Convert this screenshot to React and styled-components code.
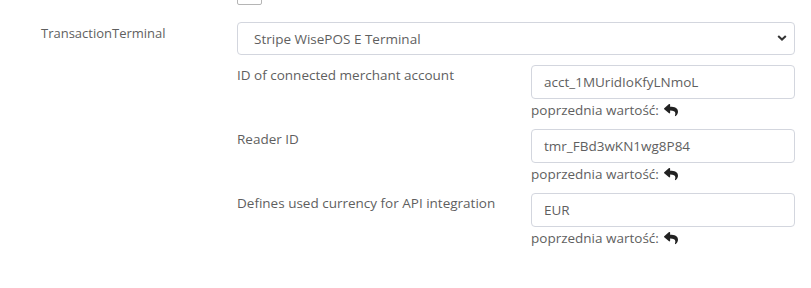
import React from "react";
import styled, { createGlobalStyle } from "styled-components";
import { FaReply } from "react-icons/fa";

const Global = createGlobalStyle`
  html, body { margin: 0; padding: 0; background: #fff; }
  body { font-family: "Open Sans", "Noto Sans", sans-serif; font-size: 13.5px; color: #5f5f5f; }
`;

const Page = styled.div`
  width: 811px;
  height: 288px;
  overflow: hidden;
`;

const Form = styled.div`
  margin-top: -20px;
  display: flex;
  flex-direction: column;
  gap: 17px;
  padding: 0 16px 0 41px;
`;

const Row = styled.div`
  display: grid;
  grid-template-columns: 196px 1fr;
  align-items: start;
`;

const RowLabel = styled.div`
  font-size: 13px;
  line-height: 18px;
  padding-top: 2px;
  color: #5f5f5f;
`;

const Checkbox = styled.div`
  width: 23px;
  height: 23px;
  border: 1px solid #b5b5b5;
  border-radius: 2px;
  background: #fff;
`;

const Value = styled.div`
  display: flex;
  flex-direction: column;
  gap: 10px;
`;

const SelectWrap = styled.div`
  position: relative;
  height: 33px;
`;

const Select = styled.div`
  box-sizing: border-box;
  height: 33px;
  border: 1px solid #d3d6de;
  border-radius: 4px;
  padding: 0 16px;
  display: flex;
  align-items: center;
  color: #5f5f5f;
`;

const Chevron = styled.svg`
  position: absolute;
  right: 8px;
  top: 12px;
`;

const Nested = styled.div`
  display: flex;
  flex-direction: column;
  gap: 10px;
`;

const Field = styled.div`
  display: grid;
  grid-template-columns: 294px 1fr;
  align-items: start;
`;

const FieldLabel = styled.div`
  line-height: 18px;
  padding-top: 1px;
  color: #5f5f5f;
`;

const FieldValue = styled.div`
  display: flex;
  flex-direction: column;
`;

const Input = styled.div`
  box-sizing: border-box;
  height: 34px;
  border: 1px solid #d3d6de;
  border-radius: 4px;
  padding: 0 12px;
  display: flex;
  align-items: center;
  color: #5f5f5f;
`;

const Hint = styled.div`
  line-height: 18px;
  margin-top: 2px;
  display: flex;
  align-items: center;
  gap: 5px;
  color: #5f5f5f;
`;

const ReplyIcon = styled(FaReply)`
  color: #222;
  font-size: 14px;
`;

const fields = [
  { label: "ID of connected merchant account", value: "acct_1MUridIoKfyLNmoL" },
  { label: "Reader ID", value: "tmr_FBd3wKN1wg8P84" },
  { label: "Defines used currency for API integration", value: "EUR" },
];

export default function App() {
  return (
    <Page>
      <Global />
      <Form>
        <Row>
          <div />
          <Checkbox />
        </Row>
        <Row>
          <RowLabel>TransactionTerminal</RowLabel>
          <Value>
            <SelectWrap>
              <Select>Stripe WisePOS E Terminal</Select>
              <Chevron width="10" height="8" viewBox="0 0 10 8">
                <path d="M1.2 2 L5 5.6 L8.8 2" fill="none" stroke="#333" strokeWidth="2" />
              </Chevron>
            </SelectWrap>
            <Nested>
              {fields.map((f) => (
                <Field key={f.label}>
                  <FieldLabel>{f.label}</FieldLabel>
                  <FieldValue>
                    <Input>{f.value}</Input>
                    <Hint>
                      poprzednia wartość: <ReplyIcon />
                    </Hint>
                  </FieldValue>
                </Field>
              ))}
            </Nested>
          </Value>
        </Row>
      </Form>
    </Page>
  );
}
